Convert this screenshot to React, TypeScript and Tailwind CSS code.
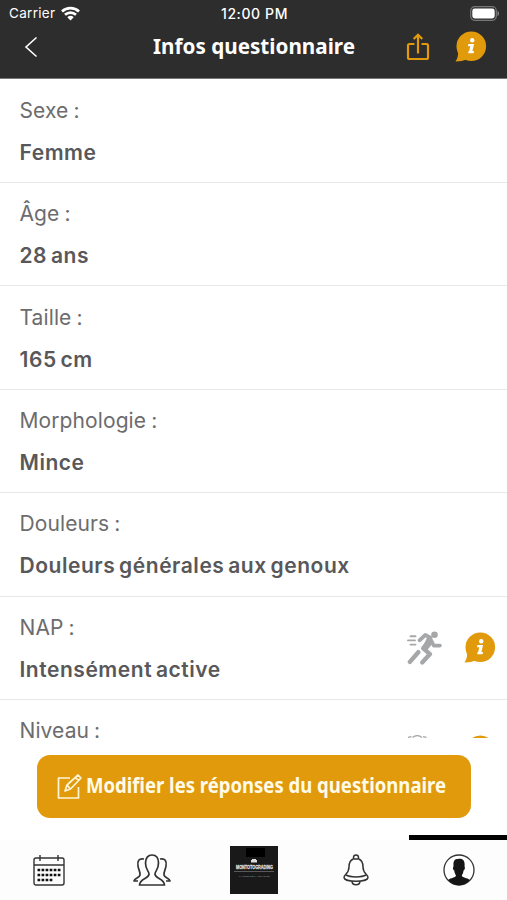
import React from 'react';

const rows = [
  { label: 'Sexe :', value: 'Femme' },
  { label: 'Âge :', value: '28 ans' },
  { label: 'Taille :', value: '165 cm' },
  { label: 'Morphologie :', value: 'Mince' },
  { label: 'Douleurs :', value: 'Douleurs générales aux genoux' },
  { label: 'NAP :', value: 'Intensément active', icon: 'runner' },
  { label: 'Niveau :', icon: 'level' },
];

const InfoBubble = () => (
  <svg width="32" height="32" viewBox="0 0 32 32" className="shrink-0">
    <circle cx="16.3" cy="15.3" r="14.8" fill="#e09a0b" />
    <path d="M2.800 20C3.500 24 2.800 27 .5 30.500c4 .1 8-.8 11-2Z" fill="#e09a0b" />
    <circle cx="17.200" cy="9.300" r="2.200" fill="#fff" />
    <path d="M13.300 13h5.800l-1.700 7h1.600l-.4 2.300h-5.400l.4-2.300h.6l1.100-4.800h-2.300Z" fill="#fff" />
  </svg>
);

const Runner = () => (
  <svg width="36" height="36" viewBox="0 0 36 36" fill="none" stroke="#a6a7a9" strokeLinecap="round" strokeLinejoin="round">
    <circle cx="27.5" cy="4.800" r="3.300" fill="#a6a7a9" stroke="none" />
    <path d="M12.500 10.300l5.800-5.300 5.200 2.600" strokeWidth="3.800" />
    <path d="M22.200 10.500l-6 7.800 6.800 5.800-7.800 8.300" strokeWidth="4.400" />
    <path d="M20.500 6.500l-5 11 4.500 3 6-7.500Z" fill="#a6a7a9" stroke="none" />
    <path d="M23.500 9l3.300 6.600h6.200" strokeWidth="3.600" />
    <path d="M11.300 22.200L2.900 31.900" strokeWidth="4.400" />
    <path d="M3.500 6.200h5M1 10.400h7M3.500 14.600h5" strokeWidth="1.900" />
  </svg>
);

const Level = () => (
  <svg width="36" height="24" viewBox="0 0 36 24" fill="none" stroke="#a6a7a9" strokeWidth="1.300">
    <path d="M5.500 2.400a8 8 0 0 1 9.500 0M1 2.400l3.500-.8M16 1.600l3.500.8" />
  </svg>
);

const StatusBar = () => (
  <div className="flex h-[27px] items-center justify-between pl-[9px] pr-[7px]">
    <div className="flex w-[120px] items-center gap-[6px] text-[13.5px] tracking-[0.3px]">
      <span>Carrier</span>
      <svg width="19" height="15" viewBox="0 0 19 15" fill="none" stroke="#fff" strokeWidth="2.700">
        <path d="M1 5.400a12.400 12.400 0 0 1 17 0M4 8.800a8 8 0 0 1 11 0" />
        <path d="M6.300 11.200a4.700 4.700 0 0 1 6.400 0L9.500 14.500Z" fill="#fff" stroke="none" />
      </svg>
    </div>
    <span className="text-[14px] font-medium tracking-[0.6px]">12:00 PM</span>
    <div className="flex w-[120px] justify-end">
      <svg width="30" height="15" viewBox="0 0 30 15">
        <rect x=".7" y=".7" width="25.600" height="13.600" rx="4" fill="none" stroke="#777" strokeWidth="1.200" />
        <rect x="2.300" y="2.500" width="22.400" height="10" rx="2.400" fill="#fff" />
        <path d="M27.500 5v5c2-.5 2-4.500 0-5" fill="#888" />
      </svg>
    </div>
  </div>
);

const Header = () => (
  <header className="h-[79px] shrink-0 border-b border-[#777] bg-[#2d2d2d] text-white">
    <StatusBar />
    <div className="flex h-[40px] items-center pl-[24px] pr-[20px]">
      <svg width="14" height="22" viewBox="0 0 14 22" fill="none" stroke="#fff" strokeWidth="1.600">
        <path d="M12.500 1.500L2 11l10.500 9.500" />
      </svg>
      <h1 className="ml-[115px] w-[202px] whitespace-nowrap font-['Noto_Sans',sans-serif] text-[22px] font-bold">
        <svg width="202" height="32" className="block overflow-visible">
          <text x="0" y="22.500" textLength="202" lengthAdjust="spacingAndGlyphs" fill="#fff">Infos questionnaire</text>
        </svg>
      </h1>
      <svg width="24" height="28" viewBox="0 0 24 28" fill="none" stroke="#e09a0b" strokeWidth="2.200" className="ml-[51px]">
        <path d="M8.500 11H3.500Q2 11 2 12.500v12Q2 26 3.500 26h17q1.500 0 1.500-1.500v-12Q22 11 20.500 11h-5M12 20.500V2M7.700 6L12 1.700 16.300 6" />
      </svg>
      <div className="ml-auto"><InfoBubble /></div>
    </div>
  </header>
);

const EditButton = () => (
  <button className="ml-[37px] mr-[36px] mt-[17px] flex h-[63px] shrink-0 items-center rounded-[13px] bg-[#e09a0b] pl-[20px] text-[#fffbe8]">
    <svg width="26" height="27" viewBox="0 0 26 27" fill="none" stroke="#fff5d6" strokeWidth="1.700" strokeLinejoin="round">
      <path d="M13 5H1.500v20h20V14" />
      <path d="M8 18l2-6L21 2l3 3-10.500 11ZM18.500 4.500l3 3M10 12l3.500 4" />
    </svg>
    <svg width="362" height="34" className="ml-[3px] overflow-visible font-['Noto_Sans',sans-serif] text-[21px] font-bold">
      <text x="0" y="22.500" textLength="360" lengthAdjust="spacingAndGlyphs" fill="#fffbe8">Modifier les réponses du questionnaire</text>
    </svg>
  </button>
);

const Calendar = () => (
  <svg width="32" height="32" viewBox="0 0 32 32" fill="none" stroke="#333" strokeWidth="1.400">
    <rect x="1" y="4" width="30" height="27" rx="2" />
    <path d="M1 11h30M7 1v6M25 1v6" />
    <path d="M4.500 16h23M4.500 21h23M4.500 26h15" stroke="#111" strokeWidth="2.700" strokeDasharray="2.700 1.350" />
  </svg>
);

const People = () => (
  <svg width="38" height="32" viewBox="0 0 38 32" fill="none" stroke="#333" strokeWidth="1.700" strokeLinejoin="round">
    <path d="M16 20c0-3-3.500-4-3.500-11 0-5 2.500-8 6.500-8s6.500 3 6.500 8c0 7-3.500 8-3.500 11 0 5 9 4 9.500 11h-25C7 24 16 25 16 20Z" />
    <path d="M11 5C6 4 4 7 5 12c.5 4 2.500 6 2 9-.5 3-5.500 3-6 6h4M27 5c5-1 7 2 6 7-.5 4-2.500 6-2 9 .5 3 5.500 3 6 6h-4" />
  </svg>
);

const Bell = () => (
  <svg width="26" height="32" viewBox="0 0 26 32" fill="none" stroke="#333" strokeWidth="1.500">
    <path d="M10.500 5C7 6 6 9 6 13c0 7-5 7-5 10.500 0 5 24 5 24 0C25 20 20 20 20 13c0-4-1-7-4.500-8" />
    <path d="M10.500 5V3.500c0-3.500 5-3.500 5 0V5M10.500 5h5M3 21c4 2.500 16 2.500 20 0M9 27c0 5 8 5 8 0" />
  </svg>
);

const Profile = () => (
  <svg width="32" height="32" viewBox="0 0 32 32">
    <circle cx="16" cy="16" r="15" fill="#fff" stroke="#333" strokeWidth="1.300" />
    <path d="M5 26c3-2.500 7.500-2 8-4.500-1-2-1.700-3-1.700-5-1 0-2-3-.8-4-.3-5 .5-7.500 4.500-7.500 3-1 7.500 0 6.500 7.500 1 1 0 4-1 4 0 2-.7 3-1.700 5 .5 2.500 5.200 2 8.200 4.500-6 7-16 7-22 0Z" fill="#151515" />
  </svg>
);

const BrandLogo = () => (
  <div className="relative h-[48px] w-[48px] bg-[#191919]">
    <div className="absolute left-[16px] top-[2px] h-[9px] w-[19px] bg-black" />
    <svg width="48" height="48" viewBox="0 0 48 48" className="relative">
      <path d="M21 16.500v-2.500h1v-1h4v1h1v2.500Z" fill="#ddd" />
      <text x="6" y="22.500" textLength="37" lengthAdjust="spacingAndGlyphs" fontFamily="Liberation Sans" fontSize="5" fontWeight="bold" fill="#ddd" stroke="#ddd" strokeWidth=".3">MONTOTOGRADING</text>
      <path d="M4 25.500h40" stroke="#777" strokeWidth=".7" />
      <text x="9" y="31" textLength="31" fontFamily="Liberation Sans" fontSize="2.500" fill="#999">L'ARLES DE LA GRADING</text>
    </svg>
  </div>
);

const TabBar = () => (
  <nav className="-ml-[2px] -mr-[3px] grid h-[60px] shrink-0 grid-cols-5 place-items-center bg-[#fdfdfd]">
    <Calendar />
    <People />
    <BrandLogo />
    <Bell />
    <Profile />
  </nav>
);

const App = () => {
  return (
    <div className="flex h-[900px] w-full flex-col overflow-hidden bg-white font-['Inter',sans-serif]">
      <Header />
      <main className="h-[659px] shrink-0 overflow-hidden pt-[0.6px]">
        {rows.map((row) => (
          <section key={row.label} className="flex h-[103.4px] justify-between border-b border-[#e8e8e8] pl-[19.5px] pr-[11px] text-[#58585a]">
            <div className="whitespace-nowrap pt-[22.3px]">
              <p className="text-[21px] leading-[18px] tracking-[0.1px] [word-spacing:-1px] text-[#6c6c6e]">{row.label}</p>
              {row.value && (
                <p className="mt-[20px] text-[21px] font-semibold leading-[26px] tracking-[0.54px] [word-spacing:-2px]">{row.value}</p>
              )}
            </div>
            {row.icon && (
              <div className="flex items-start gap-[21px] pt-[35px]">
                {row.icon === 'runner' ? <div className="-mt-[2px]"><Runner /></div> : <Level />}
                <InfoBubble />
              </div>
            )}
          </section>
        ))}
      </main>
      <EditButton />
      <div className="ml-auto mt-[17px] h-[5px] w-[98px] shrink-0 bg-black" />
      <TabBar />
    </div>
  );
};

export default App;
